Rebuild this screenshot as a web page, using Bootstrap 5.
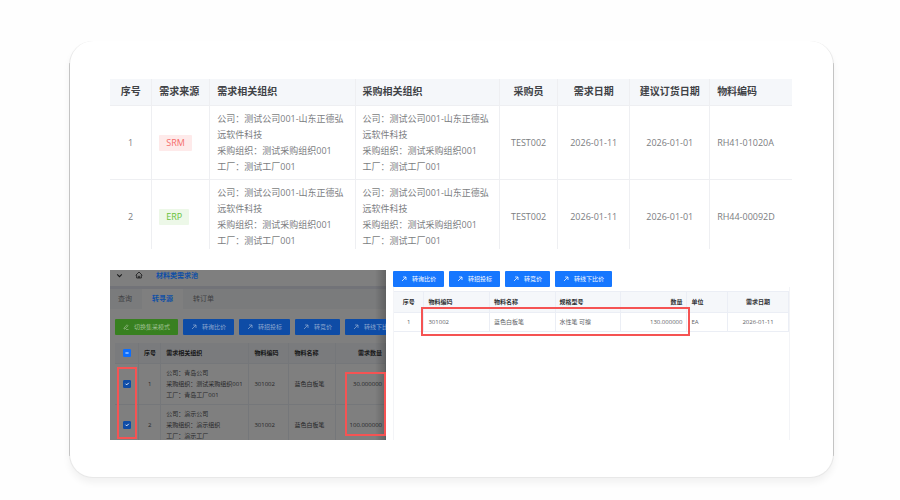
<!DOCTYPE html>
<html lang="zh-CN">
<head>
<meta charset="utf-8">
<meta name="viewport" content="width=device-width, initial-scale=1">
<title>需求池</title>
<link href="https://cdn.jsdelivr.net/npm/bootstrap@5.3.0/dist/css/bootstrap.min.css" rel="stylesheet">
<style>
  body { background: #fefefe; font-family: "Open Sans", "Noto Sans CJK SC", sans-serif; color: #606266; font-size: 9px; }
  .sheet { margin: 41px 66px 12px 69px; padding: 38px 41px 37px 40px; border: 1px solid rgba(0,0,0,.09); border-width: 0 1px 1px; border-radius: 24px; box-shadow: 0 5px 7px rgba(0,0,0,.05);
    background: linear-gradient(#d8d8d8, #d8d8d8) left / 1px calc(100% - 44px) no-repeat border-box, linear-gradient(#d8d8d8, #d8d8d8) right / 1px calc(100% - 44px) no-repeat border-box, #fff; }
  .grid-table { width: 100%; table-layout: fixed; border-collapse: separate; border-spacing: 0; }
  .grid-table th, .grid-table td { border: 0 solid #ebeef5; border-width: 0 1px 1px 0; vertical-align: middle; white-space: nowrap; overflow: hidden; }
  .grid-table th { background: #f5f7fa; color: #303133; font-weight: 700; }
  .demand { max-height: 170px; overflow: hidden; margin-bottom: 21px; }
  .demand .grid-table th, .demand .grid-table td { border-color: #eeeff2; }
  .demand th { height: 27px; font-size: 10px; padding: 0 7px 2px; line-height: 16px; color: #404246; }
  .demand td { line-height: 16px; padding: 5px 7px 4px; color: #7b7d81; }
  .demand td.org { white-space: normal; }
  .demand th:last-child, .demand td:last-child { border-right: 0; }
  .source-tag { display: inline-block; padding: 0 7px; border-radius: 1px; }
  .tag-srm { background: #feeaea; color: #f56c6c; }
  .tag-erp { background: #edf8e8; color: #67c23a; }
  .panes { height: 170px; font-size: 6px; line-height: 11px; }
  .pool { flex: 0 0 276px; }
  .shade { background: linear-gradient(90deg, rgba(0,0,0,0), rgba(0,0,0,0) 96%, rgba(0,0,0,.22)), rgba(0,0,0,.5); pointer-events: none; }
  .crumbs { height: 16px; color: #303133; font-size: 7px; padding-bottom: 6px; }
  .crumbs button { border: 0; background: none; padding: 0; display: flex; justify-content: center; width: 19px; color: #303133; }
  .crumbs a { color: #0f4fa6; font-weight: 700; text-decoration: none; padding-left: 8px; }
  .strip { height: 3px; background: #e4e7f0; }
  .tabs { height: 20px; background: #f5f6f9; font-size: 7px; }
  .tabs button { border: 0; background: none; color: #808286; padding: 0 10px; line-height: 20px; }
  .tabs button:first-child { padding: 0 10px 0 8px; }
  .tabs button.on { background: #7f7f7f; color: #0f4fa6; font-weight: 700; }
  .act { border: 0; border-radius: 1px; background: #1677ff; color: #fff; font-size: 6px; line-height: 16px; height: 16px; padding: 0 8px; display: flex; align-items: center; gap: 5px; white-space: nowrap; flex: none; }
  .act svg { width: 6px; height: 6px; }
  .gap-act { gap: 5px; }
  .above { position: relative; z-index: 1; }
  .pool-actions { padding: 10px 0 8px 5px; overflow: hidden; }
  .pool-actions .act { background: #0e4ca6; color: #8fa9cf; }
  .pool-actions .act.green { background: #388020; color: #a0c095; }
  .pool-list { padding-left: 5px; }
  .pool-list th { height: 21px; padding: 0 5px; }
  .pool-list td { height: 41px; padding: 3px 5px; color: #4c4e52; }
  .pool-list .grid-table th:last-child, .pool-list .grid-table td:last-child { padding-right: 3px; }
  .pool-list .form-check-input { width: 8px; height: 8px; border-radius: 1px; display: block; margin: auto; }
  .form-check-input:checked, .form-check-input:indeterminate { background-color: #0e4ca6; border-color: #0e4ca6; }
  .drawer { min-width: 0; padding: 1px 2px 0 7px; background: #fff; }
  .lines { border: 1px solid #ebeef5; border-width: 1px 0 0 0; margin-top: 4px; }
  .result { border: 0 solid #f3f4f7; border-width: 0 1px; }
  .lines th { height: 21px; padding: 0 5px; }
  .lines td { height: 19px; padding: 0 4px; color: #606266; }
  .lines th { padding: 0 4px; }
  .hl { position: absolute; z-index: 2; border: 2px solid #f55353; pointer-events: none; }
  .hl-checks { left: 7px; top: 97px; width: 20px; bottom: 1px; }
  .hl-qty { right: 0; top: 102px; width: 41px; bottom: 4px; }
  .hl-row { left: 35px; top: 37px; right: 102px; height: 29px; }
</style>
<script src="https://cdn.jsdelivr.net/npm/bootstrap@5.3.0/dist/js/bootstrap.bundle.min.js"></script>
</head>
<body>
<svg class="d-none" aria-hidden="true">
  <symbol id="arrow" viewBox="0 0 12 12"><path d="M2 10 10 2M4 2h6v6" fill="none" stroke="currentColor" stroke-width="1.5"/></symbol>
  <symbol id="pen" viewBox="0 0 12 12"><path d="M2 8 8 1.500l2 2L4 10H2zM6 11h5" fill="none" stroke="currentColor" stroke-width="1.300"/></symbol>
</svg>
<main class="sheet">
  <div class="demand">
    <table class="grid-table">
      <colgroup><col style="width:6.2%"><col style="width:8.5%"><col style="width:21.3%"><col style="width:21.2%"><col style="width:8.500%"><col style="width:10.600%"><col style="width:11.700%"><col></colgroup>
      <thead><tr><th class="text-center">序号</th><th>需求来源</th><th>需求相关组织</th><th>采购相关组织</th><th class="text-center">采购员</th><th class="text-center">需求日期</th><th class="text-center">建议订货日期</th><th>物料编码</th></tr></thead>
      <tbody>
        <tr><td class="text-center">1</td><td><span class="source-tag tag-srm">SRM</span></td>
          <td class="org">公司：测试公司001-山东正德弘远软件科技<br>采购组织：测试采购组织001<br>工厂：测试工厂001</td>
          <td class="org">公司：测试公司001-山东正德弘远软件科技<br>采购组织：测试采购组织001<br>工厂：测试工厂001</td>
          <td class="text-center">TEST002</td><td class="text-center">2026-01-11</td><td class="text-center">2026-01-01</td><td>RH41-01020A</td></tr>
        <tr><td class="text-center">2</td><td><span class="source-tag tag-erp">ERP</span></td>
          <td class="org">公司：测试公司001-山东正德弘远软件科技<br>采购组织：测试采购组织001<br>工厂：测试工厂001</td>
          <td class="org">公司：测试公司001-山东正德弘远软件科技<br>采购组织：测试采购组织001<br>工厂：测试工厂001</td>
          <td class="text-center">TEST002</td><td class="text-center">2026-01-11</td><td class="text-center">2026-01-01</td><td>RH44-00092D</td></tr>
      </tbody>
    </table>
  </div>

  <div class="panes d-flex overflow-hidden">
    <section class="pool position-relative overflow-hidden bg-white">
      <div class="crumbs d-flex align-items-center">
        <button type="button" aria-label="展开"><svg width="7" height="7" viewBox="0 0 12 12"><path d="m2 4 4 4 4-4" fill="none" stroke="currentColor" stroke-width="1.800"/></svg></button>
        <button type="button" aria-label="首页"><svg width="8" height="8" viewBox="0 0 12 12"><path d="M1 6.500 6 1.500l5 5M2.500 6v4.500h7V6M5 10.500V8h2v2.500" fill="none" stroke="currentColor" stroke-width="1.200"/></svg></button>
        <a href="#" class="above">材料类需求池</a>
      </div>
      <div class="strip"></div>
      <div class="tabs d-flex"><button type="button">查询</button><button type="button" class="on above">转寻源</button><button type="button">转订单</button></div>
      <div class="pool-actions above d-flex gap-act">
        <button type="button" class="act green"><svg><use href="#pen"/></svg>切换集采模式</button>
        <button type="button" class="act"><svg><use href="#arrow"/></svg>转询比价</button>
        <button type="button" class="act"><svg><use href="#arrow"/></svg>转招投标</button>
        <button type="button" class="act"><svg><use href="#arrow"/></svg>转竞价</button>
        <button type="button" class="act"><svg><use href="#arrow"/></svg>转线下比价</button>
      </div>
      <div class="pool-list">
        <table class="grid-table">
          <colgroup><col style="width:8.900%"><col style="width:8.200%"><col style="width:32.500%"><col style="width:14.800%"><col style="width:17.300%"><col></colgroup>
          <thead><tr><th><input class="form-check-input above" id="pick-all" type="checkbox" aria-label="全选"></th><th class="text-center">序号</th><th>需求相关组织</th><th>物料编码</th><th>物料名称</th><th class="text-end">需求数量</th></tr></thead>
          <tbody>
            <tr><td><input class="form-check-input above" type="checkbox" aria-label="选择第1行" checked></td><td class="text-center">1</td><td>公司：青岛公司<br>采购组织：测试采购组织001<br>工厂：青岛工厂001</td><td>301002</td><td>蓝色白板笔</td><td class="text-end">30.000000</td></tr>
            <tr><td><input class="form-check-input above" type="checkbox" aria-label="选择第2行" checked></td><td class="text-center">2</td><td>公司：演示公司<br>采购组织：演示组织<br>工厂：演示工厂</td><td>301002</td><td>蓝色白板笔</td><td class="text-end">100.000000</td></tr>
          </tbody>
        </table>
      </div>
      <div class="shade position-absolute top-0 start-0 w-100 h-100"></div>
      <div class="hl hl-checks"></div>
      <div class="hl hl-qty"></div>
    </section>

    <section class="drawer position-relative flex-fill d-flex flex-column">
      <div class="d-flex gap-act">
        <button type="button" class="act"><svg><use href="#arrow"/></svg>转询比价</button>
        <button type="button" class="act"><svg><use href="#arrow"/></svg>转招投标</button>
        <button type="button" class="act"><svg><use href="#arrow"/></svg>转竞价</button>
        <button type="button" class="act"><svg><use href="#arrow"/></svg>转线下比价</button>
      </div>
      <div class="result flex-fill">
        <table class="grid-table lines">
          <colgroup><col style="width:7.700%"><col style="width:16.600%"><col style="width:16.600%"><col style="width:16.600%"><col style="width:16.800%"><col style="width:10.300%"><col></colgroup>
          <thead><tr><th class="text-center">序号</th><th>物料编码</th><th>物料名称</th><th>规格型号</th><th class="text-end">数量</th><th>单位</th><th class="text-center">需求日期</th></tr></thead>
          <tbody><tr><td class="text-center">1</td><td>301002</td><td>蓝色白板笔</td><td>水性笔 可擦</td><td class="text-end">130.000000</td><td>EA</td><td class="text-center">2026-01-11</td></tr></tbody>
        </table>
      </div>
      <div class="hl hl-row"></div>
    </section>
  </div>
</main>
<script>document.getElementById('pick-all').indeterminate = true;</script>
</body>
</html>
